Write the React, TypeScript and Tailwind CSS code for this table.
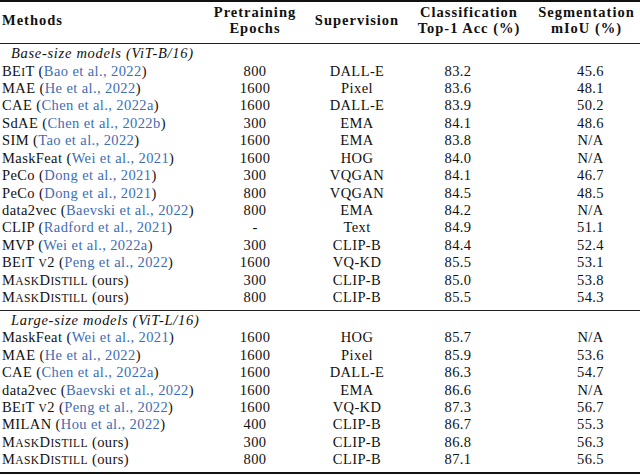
import React from "react";

type Row = { name: React.ReactNode; cite?: string; ep: string; sup: string; cls: string; seg: string };

const Sm = ({ children }: { children: React.ReactNode }) => (
  <span className="text-[11.5px]">{children}</span>
);

const BEiT = (
  <>
    BE<Sm>I</Sm>T
  </>
);
const BEiTv2 = (
  <>
    BE<Sm>I</Sm>T <Sm>V</Sm>2
  </>
);
const MD = (
  <span>
    M<Sm>ASK</Sm>D<Sm>ISTILL</Sm>
  </span>
);

const base: Row[] = [
  { name: BEiT, cite: "Bao et al., 2022", ep: "800", sup: "DALL-E", cls: "83.2", seg: "45.6" },
  { name: "MAE", cite: "He et al., 2022", ep: "1600", sup: "Pixel", cls: "83.6", seg: "48.1" },
  { name: "CAE", cite: "Chen et al., 2022a", ep: "1600", sup: "DALL-E", cls: "83.9", seg: "50.2" },
  { name: "SdAE", cite: "Chen et al., 2022b", ep: "300", sup: "EMA", cls: "84.1", seg: "48.6" },
  { name: "SIM", cite: "Tao et al., 2022", ep: "1600", sup: "EMA", cls: "83.8", seg: "N/A" },
  { name: "MaskFeat", cite: "Wei et al., 2021", ep: "1600", sup: "HOG", cls: "84.0", seg: "N/A" },
  { name: "PeCo", cite: "Dong et al., 2021", ep: "300", sup: "VQGAN", cls: "84.1", seg: "46.7" },
  { name: "PeCo", cite: "Dong et al., 2021", ep: "800", sup: "VQGAN", cls: "84.5", seg: "48.5" },
  { name: "data2vec", cite: "Baevski et al., 2022", ep: "800", sup: "EMA", cls: "84.2", seg: "N/A" },
  { name: "CLIP", cite: "Radford et al., 2021", ep: "-", sup: "Text", cls: "84.9", seg: "51.1" },
  { name: "MVP", cite: "Wei et al., 2022a", ep: "300", sup: "CLIP-B", cls: "84.4", seg: "52.4" },
  { name: BEiTv2, cite: "Peng et al., 2022", ep: "1600", sup: "VQ-KD", cls: "85.5", seg: "53.1" },
  { name: MD, ep: "300", sup: "CLIP-B", cls: "85.0", seg: "53.8" },
  { name: MD, ep: "800", sup: "CLIP-B", cls: "85.5", seg: "54.3" },
];

const large: Row[] = [
  { name: "MaskFeat", cite: "Wei et al., 2021", ep: "1600", sup: "HOG", cls: "85.7", seg: "N/A" },
  { name: "MAE", cite: "He et al., 2022", ep: "1600", sup: "Pixel", cls: "85.9", seg: "53.6" },
  { name: "CAE", cite: "Chen et al., 2022a", ep: "1600", sup: "DALL-E", cls: "86.3", seg: "54.7" },
  { name: "data2vec", cite: "Baevski et al., 2022", ep: "1600", sup: "EMA", cls: "86.6", seg: "N/A" },
  { name: BEiTv2, cite: "Peng et al., 2022", ep: "1600", sup: "VQ-KD", cls: "87.3", seg: "56.7" },
  { name: "MILAN", cite: "Hou et al., 2022", ep: "400", sup: "CLIP-B", cls: "86.7", seg: "55.3" },
  { name: MD, ep: "300", sup: "CLIP-B", cls: "86.8", seg: "56.3" },
  { name: MD, ep: "800", sup: "CLIP-B", cls: "87.1", seg: "56.5" },
];

const grid = "grid grid-cols-[207px_96px_108px_116px_113px]";

function BodyRow({ r }: { r: Row }) {
  return (
    <div className={`${grid} leading-[17.45px] h-[17.45px] whitespace-nowrap`}>
      <div className="pl-[2px]">
        {r.name}
        {r.cite ? (
          <>
            {" "}(<span className="text-[#3d6db5]">{r.cite}</span>)
          </>
        ) : (
          " (ours)"
        )}
      </div>
      <div className="text-center">{r.ep}</div>
      <div className="text-center">{r.sup}</div>
      <div className="text-center pr-[22px]">{r.cls}</div>
      <div className="text-center pl-[14px]">{r.seg}</div>
    </div>
  );
}

function Section({ label, rows }: { label: string; rows: Row[] }) {
  return (
    <div>
      <div className="h-[17.45px] leading-[17.45px] pl-[11px] italic tracking-[0.7px] whitespace-nowrap">{label}</div>
      {rows.map((r, i) => (
        <BodyRow key={i} r={r} />
      ))}
    </div>
  );
}

export default function App() {
  return (
    <div
      className="w-[640px] h-[476px] bg-white text-[#111] text-[14.5px] tracking-[0.4px] overflow-hidden"
      style={{ fontFamily: '"Liberation Serif", "Times New Roman", serif' }}
    >
      <div className="h-[1.5px] bg-[#111]" />
      <div className={`${grid} items-center font-bold tracking-[1px] leading-[16px] pt-[2.6px] pb-[6.6px] whitespace-nowrap`}>
        <div className="pl-[2px]">Methods</div>
        <div className="text-center">
          <div>Pretraining</div>
          <div>Epochs</div>
        </div>
        <div className="text-center">Supervision</div>
        <div className="text-center">
          <div>Classification</div>
          <div>Top-1 Acc (%)</div>
        </div>
        <div className="text-center pl-[6px]">
          <div>Segmentation</div>
          <div>mIoU (%)</div>
        </div>
      </div>
      <div className="h-[1.3px] bg-[#222]" />
      <div className="pt-[1.1px] pb-[3.3px]">
        <Section label="Base-size models (ViT-B/16)" rows={base} />
      </div>
      <div className="h-[1.2px] bg-[#222]" />
      <div className="pt-[0.7px] pb-[3px]">
        <Section label="Large-size models (ViT-L/16)" rows={large} />
      </div>
      <div className="h-[2px] bg-[#111]" />
    </div>
  );
}
